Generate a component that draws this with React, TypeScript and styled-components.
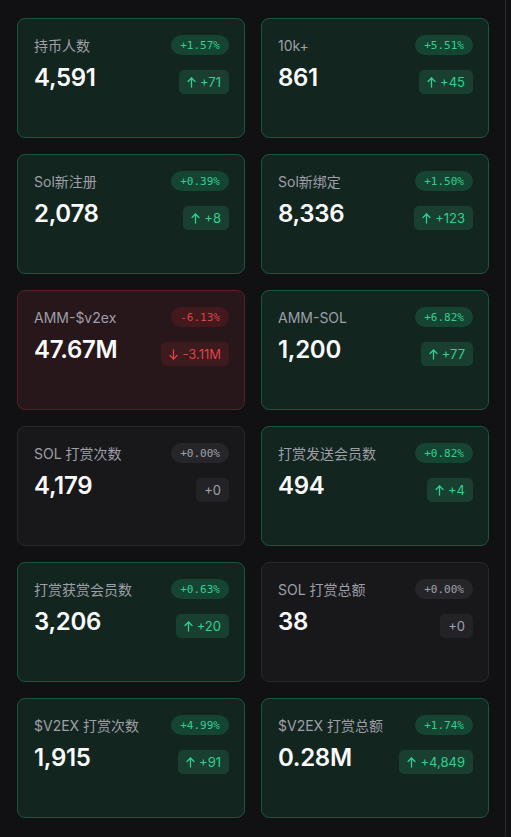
import React from "react";
import styled, { createGlobalStyle, css } from "styled-components";

type Tone = "up" | "down" | "flat";

interface Stat {
  label: string;
  value: string;
  pct: string;
  delta: string;
  tone: Tone;
}

const stats: Stat[] = [
  { label: "持币人数", value: "4,591", pct: "+1.57%", delta: "+71", tone: "up" },
  { label: "10k+", value: "861", pct: "+5.51%", delta: "+45", tone: "up" },
  { label: "Sol新注册", value: "2,078", pct: "+0.39%", delta: "+8", tone: "up" },
  { label: "Sol新绑定", value: "8,336", pct: "+1.50%", delta: "+123", tone: "up" },
  { label: "AMM-$v2ex", value: "47.67M", pct: "-6.13%", delta: "-3.11M", tone: "down" },
  { label: "AMM-SOL", value: "1,200", pct: "+6.82%", delta: "+77", tone: "up" },
  { label: "SOL 打赏次数", value: "4,179", pct: "+0.00%", delta: "+0", tone: "flat" },
  { label: "打赏发送会员数", value: "494", pct: "+0.82%", delta: "+4", tone: "up" },
  { label: "打赏获赏会员数", value: "3,206", pct: "+0.63%", delta: "+20", tone: "up" },
  { label: "SOL 打赏总额", value: "38", pct: "+0.00%", delta: "+0", tone: "flat" },
  { label: "$V2EX 打赏次数", value: "1,915", pct: "+4.99%", delta: "+91", tone: "up" },
  { label: "$V2EX 打赏总额", value: "0.28M", pct: "+1.74%", delta: "+4,849", tone: "up" },
];

const palette = {
  up: { card: "#12261f", border: "#1b553d", pill: "#154432", badge: "#183f30", text: "#32cf90" },
  down: { card: "#27171a", border: "#5a2024", pill: "#42191c", badge: "#3d1a1d", text: "#dc4448" },
  flat: { card: "#18181b", border: "#29292d", pill: "#26262a", badge: "#232327", text: "#a1a1aa" },
};

const GlobalStyle = createGlobalStyle`
  html, body {
    margin: 0;
    padding: 0;
    background: #111113;
    overflow: hidden;
  }
  body {
    font-family: Inter, "Noto Sans CJK SC", sans-serif;
    -webkit-font-smoothing: antialiased;
  }
`;

const Panel = styled.div`
  width: 506px;
  height: 846px;
  box-sizing: border-box;
  border-right: 1px solid #2a2a2e;
  border-bottom: 1px solid #2a2a2e;
  border-bottom-right-radius: 12px;
  padding: 18px 0 0 17px;
`;

const Grid = styled.div`
  display: grid;
  grid-template-columns: 228px 228px;
  grid-auto-rows: 120px;
  column-gap: 16px;
  row-gap: 16px;
`;

const Card = styled.div<{ $tone: Tone }>`
  box-sizing: border-box;
  border-radius: 8px;
  padding: 16px 15px 0 16px;
  ${({ $tone }) => css`
    background: ${palette[$tone].card};
    border: 1px solid ${palette[$tone].border};
  `}
`;

const Head = styled.div`
  display: flex;
  align-items: center;
  justify-content: space-between;
  height: 20px;
`;

const Label = styled.span`
  font-size: 14px;
  color: #9f9fa7;
  white-space: nowrap;
`;

const Pill = styled.span<{ $tone: Tone }>`
  height: 20px;
  padding: 0 9px;
  border-radius: 10px;
  display: inline-flex;
  align-items: center;
  font-family: "DejaVu Sans Mono", "Liberation Mono", monospace;
  font-size: 11px;
  ${({ $tone }) => css`
    background: ${palette[$tone].pill};
    color: ${palette[$tone].text};
  `}
`;

const Body = styled.div`
  display: flex;
  align-items: flex-start;
  justify-content: space-between;
  margin-top: 7px;
`;

const Value = styled.span`
  font-size: 24px;
  line-height: 31px;
  font-weight: 600;
  letter-spacing: -0.3px;
  color: #fafafa;
`;

const Badge = styled.span<{ $tone: Tone }>`
  margin-top: 8px;
  height: 24px;
  padding: 0 8px;
  border-radius: 5px;
  display: inline-flex;
  align-items: center;
  gap: 4px;
  font-size: 13px;
  ${({ $tone }) => css`
    background: ${palette[$tone].badge};
    color: ${palette[$tone].text};
  `}
`;

function Arrow({ down }: { down?: boolean }) {
  return (
    <svg width="9" height="11" viewBox="0 0 9 11" fill="none" stroke="currentColor" strokeWidth="1.3" strokeLinecap="round" strokeLinejoin="round">
      {down ? (
        <>
          <path d="M4.5 1v9" />
          <path d="M1 6.5l3.5 3.5L8 6.5" />
        </>
      ) : (
        <>
          <path d="M4.5 10V1" />
          <path d="M1 4.5L4.5 1 8 4.5" />
        </>
      )}
    </svg>
  );
}

function StatCard({ stat }: { stat: Stat }) {
  return (
    <Card $tone={stat.tone}>
      <Head>
        <Label>{stat.label}</Label>
        <Pill $tone={stat.tone}>{stat.pct}</Pill>
      </Head>
      <Body>
        <Value>{stat.value}</Value>
        <Badge $tone={stat.tone}>
          {stat.tone !== "flat" && <Arrow down={stat.tone === "down"} />}
          {stat.delta}
        </Badge>
      </Body>
    </Card>
  );
}

export default function App() {
  return (
    <>
      <GlobalStyle />
      <Panel>
        <Grid>
          {stats.map((s) => (
            <StatCard key={s.label} stat={s} />
          ))}
        </Grid>
      </Panel>
    </>
  );
}
